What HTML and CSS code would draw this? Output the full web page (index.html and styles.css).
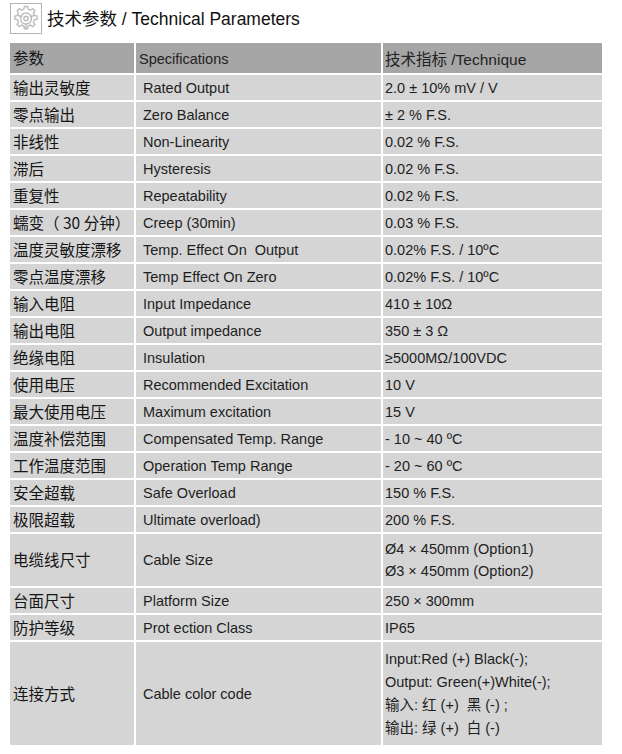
FILE: index.html
```html
<!DOCTYPE html>
<html lang="zh">
<head>
<meta charset="utf-8">
<title>技术参数 / Technical Parameters</title>
<link rel="stylesheet" href="styles.css">
</head>
<body>
<div class="title">
  <span class="icon">
    <svg width="32" height="31" viewBox="0 0 32 31">
      <rect x="0.5" y="0.5" width="31" height="30" fill="#fff" stroke="#b4b4b4"/>
      <g fill="none" stroke="#bdbdbd" stroke-width="1.4">
        <path d="M14.5 3.5h3l.6 2.6 2.4 1 2.3-1.4 2.1 2.1-1.4 2.3 1 2.4 2.6.6v3l-2.6.6-1 2.4 1.4 2.3-2.1 2.1-2.3-1.4-2.4 1-.6 2.6h-3l-.6-2.6-2.4-1-2.3 1.4-2.1-2.1 1.4-2.3-1-2.4-2.6-.6v-3l2.6-.6 1-2.4-1.4-2.3 2.1-2.1 2.3 1.4 2.4-1z"/>
        <circle cx="16" cy="15.5" r="5.5"/>
        <circle cx="16" cy="15.5" r="2.2"/>
        <path d="M8 12.5l4 1.5M24 12.5l-4 1.5M16 25v-4"/>
      </g>
    </svg>
  </span>
  <h1>技术参数 / Technical Parameters</h1>
</div>
<table class="spec">
  <colgroup><col class="c1"><col class="c2"><col class="c3"></colgroup>
  <thead>
    <tr><th class="cn">参数</th><th class="en">Specifications</th><th class="val">技术指标 /Technique</th></tr>
  </thead>
  <tbody>
    <tr><td class="cn">输出灵敏度</td><td class="en">Rated Output</td><td class="val">2.0 ± 10% mV / V</td></tr>
    <tr><td class="cn">零点输出</td><td class="en">Zero Balance</td><td class="val">± 2 % F.S.</td></tr>
    <tr><td class="cn">非线性</td><td class="en">Non-Linearity</td><td class="val">0.02 % F.S.</td></tr>
    <tr><td class="cn">滞后</td><td class="en">Hysteresis</td><td class="val">0.02 % F.S.</td></tr>
    <tr><td class="cn">重复性</td><td class="en">Repeatability</td><td class="val">0.02 % F.S.</td></tr>
    <tr><td class="cn">蠕变（ 30 分钟）</td><td class="en">Creep (30min)</td><td class="val">0.03 % F.S.</td></tr>
    <tr><td class="cn">温度灵敏度漂移</td><td class="en">Temp. Effect On&nbsp; Output</td><td class="val">0.02% F.S. / 10ºC</td></tr>
    <tr><td class="cn">零点温度漂移</td><td class="en">Temp Effect On Zero</td><td class="val">0.02% F.S. / 10ºC</td></tr>
    <tr><td class="cn">输入电阻</td><td class="en">Input Impedance</td><td class="val">410 ± 10Ω</td></tr>
    <tr><td class="cn">输出电阻</td><td class="en">Output impedance</td><td class="val">350 ± 3 Ω</td></tr>
    <tr><td class="cn">绝缘电阻</td><td class="en">Insulation</td><td class="val arial">≥5000MΩ/100VDC</td></tr>
    <tr><td class="cn">使用电压</td><td class="en">Recommended Excitation</td><td class="val">10 V</td></tr>
    <tr><td class="cn">最大使用电压</td><td class="en">Maximum excitation</td><td class="val">15 V</td></tr>
    <tr><td class="cn">温度补偿范围</td><td class="en">Compensated Temp. Range</td><td class="val">- 10 ~ 40 ºC</td></tr>
    <tr><td class="cn">工作温度范围</td><td class="en">Operation Temp Range</td><td class="val">- 20 ~ 60 ºC</td></tr>
    <tr><td class="cn">安全超载</td><td class="en">Safe Overload</td><td class="val">150 % F.S.</td></tr>
    <tr><td class="cn">极限超载</td><td class="en">Ultimate overload)</td><td class="val">200 % F.S.</td></tr>
    <tr class="tall"><td class="cn">电缆线尺寸</td><td class="en">Cable Size</td><td class="val lines">Ø4 × 450mm (Option1)<br>Ø3 × 450mm (Option2)</td></tr>
    <tr><td class="cn">台面尺寸</td><td class="en">Platform Size</td><td class="val">250 × 300mm</td></tr>
    <tr><td class="cn">防护等级</td><td class="en">Prot ection Class</td><td class="val">IP65</td></tr>
    <tr class="last"><td class="cn">连接方式</td><td class="en">Cable color code</td><td class="val lines4">Input:Red (+) Black(-);<br>Output: Green(+)White(-);<br>输入: 红 (+)&nbsp; 黑 (-) ;<br>输出: 绿 (+)&nbsp; 白 (-)</td></tr>
  </tbody>
</table>
</body>
</html>
```

FILE: styles.css
```css
html, body {
  margin: 0;
  padding: 0;
  background: #fff;
}
body {
  font-family: "Liberation Sans", "Noto Sans CJK SC", sans-serif;
  color: #222;
}
.title {
  display: flex;
  align-items: center;
  padding: 2px 0 0 10px;
  height: 32px;
}
.icon {
  display: block;
  width: 32px;
  height: 31px;
}
.icon svg { display: block; }
.title h1 {
  margin: -2px 0 0 5px;
  font-size: 17.5px;
  font-weight: normal;
  color: #111;
  font-family: "Liberation Sans", "Noto Sans CJK SC", sans-serif;
}
.spec {
  margin: 9px 0 0 10px;
  width: 592px;
  table-layout: fixed;
  border-collapse: separate;
  border-spacing: 0;
}
.c1 { width: 126px; }
.c2 { width: 247px; }
.c3 { width: 219px; }
.spec th, .spec td {
  border-right: 2px solid #fff;
  border-bottom: 2px solid #fff;
  padding: 0;
  text-align: left;
  font-weight: normal;
  vertical-align: middle;
  background: #d5d5d5;
  font-size: 14.5px;
  color: #1e1e1e;
  white-space: nowrap;
}
.spec th {
  background: #a6a6a6;
  height: 30px;
  color: #222;
}
.spec td { height: 25px; }
.spec th:last-child, .spec td:last-child { border-right: 0; }
.spec tr.last td { border-bottom: 0; }
.spec .cn {
  padding: 0 0 2px 3px;
  font-size: 15.5px;
  color: #151515;
  font-family: "Noto Sans CJK SC", "Liberation Sans", sans-serif;
  line-height: 20px;
}
.spec td.cn { height: 23px; }
.spec th.cn { height: 28px; }
.spec td.en { padding-left: 7px; }
.spec th.en { padding-left: 3px; padding-top: 2px; height: 28px; }
.spec .val { padding-left: 2px; }
.spec th.val { font-size: 15.5px; }
.spec .arial { font-family: "Liberation Sans", sans-serif; }
.spec tr.tall td { height: 52px; }
.spec tr.tall td.cn { height: 50px; }
.spec .lines { line-height: 22px; }
.spec tr.last td { height: 103px; }
.spec tr.last td.cn { height: 101px; }
.spec .lines4 { line-height: 23px; }
```
